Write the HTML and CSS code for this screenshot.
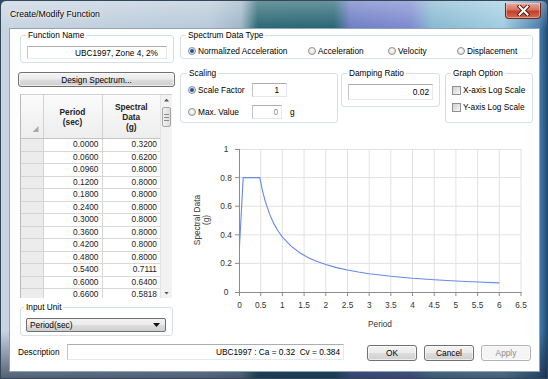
FILE: index.html
```html
<!DOCTYPE html>
<html>
<head>
  <title>Create/Modify Function</title>
  <link rel="stylesheet" href="styles.css">
</head>
<body>
  <div class="window">
    <div class="title-bar">
      <span class="title">Create/Modify Function</span>
      <button class="close-button">
        <svg width="13" height="11" viewBox="0 0 13 11">
          <path d="M2.5 1.5 L10.5 9.5 M10.5 1.5 L2.5 9.5" stroke="#5a1a14" stroke-width="4" stroke-linecap="square"/>
          <path d="M2.5 1.5 L10.5 9.5 M10.5 1.5 L2.5 9.5" stroke="#fff" stroke-width="2" stroke-linecap="square"/>
        </svg>
      </button>
    </div>
    <div class="client">
      <div class="main">
        <div class="left-column">
          <fieldset class="group name-group">
            <legend>Function Name</legend>
            <input class="text-field name-field" value="UBC1997, Zone 4, 2%">
          </fieldset>
          <button class="button spectrum-button">Design Spectrum...</button>
          <div class="grid">
            <div class="grid-body">
              <table class="data-table">
                <thead>
                  <tr>
                    <th class="corner"><span class="sort-mark"></span></th>
                    <th class="period-col">Period<br>(sec)</th>
                    <th class="value-col">Spectral<br>Data<br>(g)</th>
                  </tr>
                </thead>
                <tbody>
                  <tr><td class="row-head"></td><td>0.0000</td><td>0.3200</td></tr>
                  <tr><td class="row-head"></td><td>0.0600</td><td>0.6200</td></tr>
                  <tr><td class="row-head"></td><td>0.0960</td><td>0.8000</td></tr>
                  <tr><td class="row-head"></td><td>0.1200</td><td>0.8000</td></tr>
                  <tr><td class="row-head"></td><td>0.1800</td><td>0.8000</td></tr>
                  <tr><td class="row-head"></td><td>0.2400</td><td>0.8000</td></tr>
                  <tr><td class="row-head"></td><td>0.3000</td><td>0.8000</td></tr>
                  <tr><td class="row-head"></td><td>0.3600</td><td>0.8000</td></tr>
                  <tr><td class="row-head"></td><td>0.4200</td><td>0.8000</td></tr>
                  <tr><td class="row-head"></td><td>0.4800</td><td>0.8000</td></tr>
                  <tr><td class="row-head"></td><td>0.5400</td><td>0.7111</td></tr>
                  <tr><td class="row-head"></td><td>0.6000</td><td>0.6400</td></tr>
                  <tr><td class="row-head"></td><td>0.6600</td><td>0.5818</td></tr>
                </tbody>
              </table>
            </div>
            <div class="scrollbar">
              <div class="scroll-arrow"><span class="arrow-up"></span></div>
              <div class="scroll-thumb"><span></span><span></span><span></span></div>
              <div class="scroll-track"></div>
              <div class="scroll-arrow"><span class="arrow-down"></span></div>
            </div>
          </div>
          <fieldset class="group unit-group">
            <legend>Input Unit</legend>
            <div class="select">
              <span>Period(sec)</span>
              <span class="select-arrow"></span>
            </div>
          </fieldset>
        </div>

        <div class="right-column">
          <fieldset class="group type-group">
            <legend>Spectrum Data Type</legend>
            <div class="type-options">
              <label class="option type-normalized"><span class="radio checked"></span>Normalized Acceleration</label>
              <label class="option type-acceleration"><span class="radio"></span>Acceleration</label>
              <label class="option type-velocity"><span class="radio"></span>Velocity</label>
              <label class="option"><span class="radio"></span>Displacement</label>
            </div>
          </fieldset>

          <div class="option-row">
            <fieldset class="group scaling-group">
              <legend>Scaling</legend>
              <div class="scale-line first">
                <label class="option scale-label"><span class="radio checked"></span>Scale Factor</label>
                <input class="text-field scale-field" value="1">
              </div>
              <div class="scale-line">
                <label class="option scale-label"><span class="radio"></span>Max. Value</label>
                <input class="text-field max-field" value="0" disabled>
                <span class="unit">g</span>
              </div>
            </fieldset>

            <fieldset class="group damping-group">
              <legend>Damping Ratio</legend>
              <input class="text-field damping-field" value="0.02">
            </fieldset>

            <fieldset class="group graph-group">
              <legend>Graph Option</legend>
              <label class="option check-line first"><span class="checkbox"></span>X-axis Log Scale</label>
              <label class="option check-line"><span class="checkbox"></span>Y-axis Log Scale</label>
            </fieldset>
          </div>

          <svg class="chart" width="353" height="207" viewBox="180 128 353 207">
            <g class="grid-lines">
              <line x1="260.7" y1="150" x2="260.7" y2="293"/>
              <line x1="282.4" y1="150" x2="282.4" y2="293"/>
              <line x1="304.1" y1="150" x2="304.1" y2="293"/>
              <line x1="325.8" y1="150" x2="325.8" y2="293"/>
              <line x1="347.5" y1="150" x2="347.5" y2="293"/>
              <line x1="369.2" y1="150" x2="369.2" y2="293"/>
              <line x1="390.8" y1="150" x2="390.8" y2="293"/>
              <line x1="412.5" y1="150" x2="412.5" y2="293"/>
              <line x1="434.2" y1="150" x2="434.2" y2="293"/>
              <line x1="455.9" y1="150" x2="455.9" y2="293"/>
              <line x1="477.6" y1="150" x2="477.6" y2="293"/>
              <line x1="499.3" y1="150" x2="499.3" y2="293"/>
              <line x1="521" y1="150" x2="521" y2="293"/>
              <line x1="239" y1="150.5" x2="521" y2="150.5"/>
              <line x1="239" y1="178.6" x2="521" y2="178.6"/>
              <line x1="239" y1="207.2" x2="521" y2="207.2"/>
              <line x1="239" y1="235.8" x2="521" y2="235.8"/>
              <line x1="239" y1="264.4" x2="521" y2="264.4"/>
            </g>
            <g class="axis">
              <line x1="239.5" y1="150" x2="239.5" y2="293.5"/>
              <line x1="239" y1="293.5" x2="521.5" y2="293.5"/>
              <path d="M235 150.5 H239 M235 178.6 H239 M235 207.2 H239 M235 235.8 H239 M235 264.4 H239 M235 293.5 H239"/>
              <path d="M239.5 293 V297 M260.7 293 V297 M282.4 293 V297 M304.1 293 V297 M325.8 293 V297 M347.5 293 V297 M369.2 293 V297 M390.8 293 V297 M412.5 293 V297 M434.2 293 V297 M455.9 293 V297 M477.6 293 V297 M499.3 293 V297 M521 293 V297"/>
            </g>
            <g class="tick-labels y-labels">
              <text x="226" y="153">1</text>
              <text x="226" y="181.6">0.8</text>
              <text x="226" y="210.2">0.6</text>
              <text x="226" y="238.8">0.4</text>
              <text x="226" y="267.4">0.2</text>
              <text x="226" y="296">0</text>
            </g>
            <g class="tick-labels x-labels">
              <text x="239.5" y="309">0</text>
              <text x="260.7" y="309">0.5</text>
              <text x="282.4" y="309">1</text>
              <text x="304.1" y="309">1.5</text>
              <text x="325.8" y="309">2</text>
              <text x="347.5" y="309">2.5</text>
              <text x="369.2" y="309">3</text>
              <text x="390.8" y="309">3.5</text>
              <text x="412.5" y="309">4</text>
              <text x="434.2" y="309">4.5</text>
              <text x="455.9" y="309">5</text>
              <text x="477.6" y="309">5.5</text>
              <text x="499.3" y="309">6</text>
              <text x="521" y="309">6.5</text>
            </g>
            <text class="axis-title" x="380" y="328">Period</text>
            <g class="axis-title" transform="translate(200 221) rotate(-90)">
              <text x="0" y="0">Spectral Data</text>
              <text x="0" y="9">(g)</text>
            </g>
            <polyline class="curve" points="239.5,247.2 243.2,178.6 259.8,178.6 262.4,191.3 265,201.5 269.4,214.6 273.7,224.4 278.1,232 282.4,238.1 291.1,247.2 299.7,253.8 308.4,258.7 317.1,262.5 325.8,265.5 336.6,268.6 347.5,271 358.3,273 369.2,274.7 390.8,277.3 412.5,279.3 434.2,280.8 455.9,282 477.6,283 499.3,283.9"/>
          </svg>
        </div>
      </div>

      <div class="bottom-bar">
        <span class="description-label">Description</span>
        <input class="text-field description-field" value="UBC1997 : Ca = 0.32  Cv = 0.384">
        <button class="button dialog-button ok-button">OK</button>
        <button class="button dialog-button">Cancel</button>
        <button class="button dialog-button" disabled>Apply</button>
      </div>
    </div>
  </div>
</body>
</html>
```

FILE: styles.css
```css
body {
  margin: 0;
  width: 548px;
  height: 379px;
  overflow: hidden;
  font-family: "Liberation Sans", Arial, sans-serif;
  font-size: 8.3px;
  color: #000;
  background-color: #2c4a6c;
}

.window {
  height: 379px;
  box-sizing: border-box;
  display: flex;
  flex-direction: column;
  border: 1px solid #34465a;
  border-radius: 6px 6px 0 0;
  background:
    linear-gradient(to bottom, rgba(255, 255, 255, 0.3), rgba(255, 255, 255, 0) 28px, rgba(0, 0, 0, 0) 330px, rgba(20, 35, 60, 0.65)),
    linear-gradient(to right, #c7d4e1 0%, #b8c9d9 38%, #9fb6c6 44%, #2a6774 47%, #266572 61%, #6d7dc4 64%, #7d89cf 75%, #86b9d0 79%, #a0cde1 92%, #4a80ad 98.5%, #234f7c 100%);
}

.title-bar {
  height: 27px;
  display: flex;
  align-items: flex-start;
  justify-content: space-between;
}

.title {
  margin: 8px 0 0 9px;
  font-size: 8.7px;
  line-height: 11px;
  text-shadow: 0 0 5px rgba(255, 255, 255, 0.9), 0 0 2px rgba(255, 255, 255, 0.9);
}

.close-button {
  width: 36px;
  height: 16px;
  margin: 2px 6px 0 0;
  padding: 0;
  display: flex;
  align-items: center;
  justify-content: center;
  border: 1px solid #6b2a22;
  border-top: none;
  border-radius: 0 0 4px 4px;
  background: linear-gradient(#e9a99b, #d27462 45%, #c2402b 55%, #d66a4c);
  box-shadow: inset 0 0 0 1px rgba(255, 255, 255, 0.35);
}

.client {
  flex: 1;
  margin: 0 7px 6px 8px;
  padding: 1px 6px 0 8px;
  background-color: #fff;
  border: 1px solid #8fa3b5;
}

.main {
  display: flex;
  gap: 5px;
}

.left-column {
  width: 157px;
  display: flex;
  flex-direction: column;
}

.right-column {
  width: 353px;
  display: flex;
  flex-direction: column;
}

/* group boxes */
.group {
  margin: 0;
  padding: 0 6px 3px;
  min-width: 0;
  border: 1px solid #d5dfe5;
  border-radius: 3px;
}

.group legend {
  margin-left: -1px;
  padding: 0 2px;
  line-height: 10px;
}

.text-field {
  box-sizing: border-box;
  display: block;
  margin: 0;
  padding: 0 3px;
  font-family: inherit;
  font-size: 8.3px;
  color: #000;
  text-align: right;
  background-color: #fff;
  border: 1px solid #e3e9ef;
  border-top-color: #abadb3;
  border-left-color: #c2c6cc;
}

.text-field:disabled {
  color: #8a8a8a;
}

.button {
  box-sizing: border-box;
  height: 15px;
  padding: 0;
  font-family: inherit;
  font-size: 8.3px;
  color: #000;
  background: linear-gradient(#f3f3f3, #ebebeb 48%, #dddddd 52%, #cfcfcf);
  border: 1px solid #707070;
  border-radius: 3px;
  box-shadow: inset 0 0 0 1px rgba(255, 255, 255, 0.6);
}

.button:disabled {
  color: #8d8d8d;
  background: #f4f4f4;
  border-color: #adb2b5;
}

/* left column */
.name-group {
  margin: 0 1px 0 2px;
}

.name-field {
  width: 140px;
  height: 13px;
  margin-top: 6px;
  padding-right: 8px;
}

.spectrum-button {
  margin-top: 9px;
}

.grid {
  height: 203px;
  margin: 7px 3px 0 2px;
  display: flex;
  overflow: hidden;
  border-left: 1px solid #b9b9b9;
  border-top: 1px solid #cfcfcf;
}

.grid-body {
  width: 140px;
  overflow: hidden;
}

.data-table {
  width: 140px;
  border-collapse: collapse;
  table-layout: fixed;
}

.data-table th {
  height: 43px;
  padding: 0;
  font-weight: bold;
  line-height: 10px;
  color: #222;
  background: linear-gradient(#fbfbfb, #ededed);
  border-right: 1px solid #d2d2d2;
  border-bottom: 1px solid #c4c4c4;
}

.data-table .corner {
  width: 22px;
  vertical-align: bottom;
  text-align: right;
  padding: 0 4px 4px 0;
  box-sizing: border-box;
}

.sort-mark {
  display: inline-block;
  width: 6px;
  height: 6px;
  background-color: #a9a9a9;
  clip-path: polygon(100% 0, 100% 100%, 0 100%);
}

.data-table .period-col {
  width: 58px;
}

.data-table td {
  height: 12.5px;
  box-sizing: border-box;
  padding: 0 3px 0 0;
  line-height: 11px;
  text-align: right;
  color: #1a1a1a;
  border-right: 1px solid #d8d8d8;
  border-bottom: 1px solid #d8d8d8;
}

.data-table .row-head {
  background-color: #ececec;
  border-color: #d4d4d4;
}

.scrollbar {
  width: 11px;
  display: flex;
  flex-direction: column;
  background-color: #f2f2f2;
  border-left: 1px solid #e4e4e4;
}

.scroll-arrow {
  height: 10px;
  display: flex;
  align-items: center;
  justify-content: center;
}

.arrow-up,
.arrow-down {
  width: 5px;
  height: 3px;
  background-color: #555;
}

.arrow-up {
  clip-path: polygon(50% 0, 100% 100%, 0 100%);
}

.arrow-down {
  clip-path: polygon(0 0, 100% 0, 50% 100%);
}

.scroll-thumb {
  height: 20px;
  margin: 2px 1px 0;
  display: flex;
  flex-direction: column;
  align-items: center;
  justify-content: center;
  gap: 2px;
  box-sizing: border-box;
  background: linear-gradient(to right, #f1f1f1, #dcdcdc);
  border: 1px solid #a6a6a6;
  border-radius: 2px;
}

.scroll-thumb span {
  width: 5px;
  height: 1px;
  background-color: #8a8a8a;
}

.scroll-track {
  flex: 1;
}

.unit-group {
  margin: 4px 2px 0 2px;
  padding-left: 5px;
}

.unit-group legend {
  margin-left: -2px;
}

.select {
  box-sizing: border-box;
  width: 140px;
  height: 14px;
  margin-top: 6px;
  padding: 0 5px 0 3px;
  display: flex;
  align-items: center;
  justify-content: space-between;
  background: linear-gradient(#f3f3f3, #ebebeb 48%, #dddddd 52%, #cfcfcf);
  border: 1px solid #707070;
  border-radius: 2px;
}

.select-arrow {
  width: 7px;
  height: 4px;
  background-color: #111;
  clip-path: polygon(0 0, 100% 0, 50% 100%);
}

/* right column */
.option {
  display: flex;
  align-items: center;
  gap: 2px;
  line-height: 10px;
  white-space: nowrap;
}

.radio {
  flex: none;
  width: 8px;
  height: 8px;
  box-sizing: border-box;
  border: 1px solid #8e8f8f;
  border-radius: 50%;
  background: radial-gradient(circle at 45% 40%, #fdfdfd, #d6d6d6);
}

.radio.checked {
  background: radial-gradient(circle, #183f78 0, #2e67b4 1.5px, #dbe6f3 2.5px, #c9d0d8 4px);
}

.checkbox {
  flex: none;
  width: 9px;
  height: 9px;
  box-sizing: border-box;
  border: 1px solid #8f8f8f;
  background: linear-gradient(135deg, #d0d0d0, #f7f7f7);
}

.type-group {
  padding-bottom: 2px;
}

.type-options {
  height: 10px;
  margin: 6px 0 0 1px;
  display: flex;
}

.type-normalized {
  width: 120px;
}

.type-acceleration {
  width: 80px;
}

.type-velocity {
  width: 69px;
}

.option-row {
  margin-top: 9px;
  display: flex;
  align-items: flex-start;
}

.scaling-group {
  width: 158px;
  box-sizing: border-box;
  padding-left: 7px;
}

.scale-line {
  height: 14px;
  margin-top: 8px;
  display: flex;
  align-items: center;
}

.scale-line.first {
  margin-top: 5px;
}

.scale-label {
  width: 64px;
}

.scale-field {
  width: 35px;
  height: 14px;
  padding-right: 7px;
}

.max-field {
  width: 30px;
  height: 14px;
  padding-right: 3px;
}

.unit {
  margin-left: 8px;
}

.damping-group {
  width: 99px;
  box-sizing: border-box;
  margin-left: 3px;
  padding-bottom: 6px;
}

.damping-field {
  width: 85px;
  height: 16px;
  margin-top: 6px;
}

.graph-group {
  width: 88px;
  box-sizing: border-box;
  margin-left: 5px;
  padding-bottom: 10px;
}

.check-line {
  height: 10px;
  margin-top: 7px;
}

.chart {
  display: block;
  margin-top: 4px;
}

.grid-lines line {
  stroke: #e2e2e2;
  stroke-width: 1;
}

.axis line,
.axis path {
  stroke: #8c8c8c;
  stroke-width: 1;
  fill: none;
}

.tick-labels text,
.axis-title text,
text.axis-title {
  font-family: "Liberation Sans", Arial, sans-serif;
  font-size: 8.3px;
  fill: #333;
  text-anchor: middle;
}

.curve {
  fill: none;
  stroke: #6689ec;
  stroke-width: 1.1;
}

/* bottom bar */
.bottom-bar {
  margin-top: 8px;
  display: flex;
  align-items: flex-start;
}

.description-label {
  width: 49px;
  line-height: 16px;
}

.description-field {
  width: 277px;
  height: 16px;
}

.dialog-button {
  width: 50px;
  height: 16px;
  margin: 1px 0 0 7px;
}

.ok-button {
  margin-left: 23px;
}
```
